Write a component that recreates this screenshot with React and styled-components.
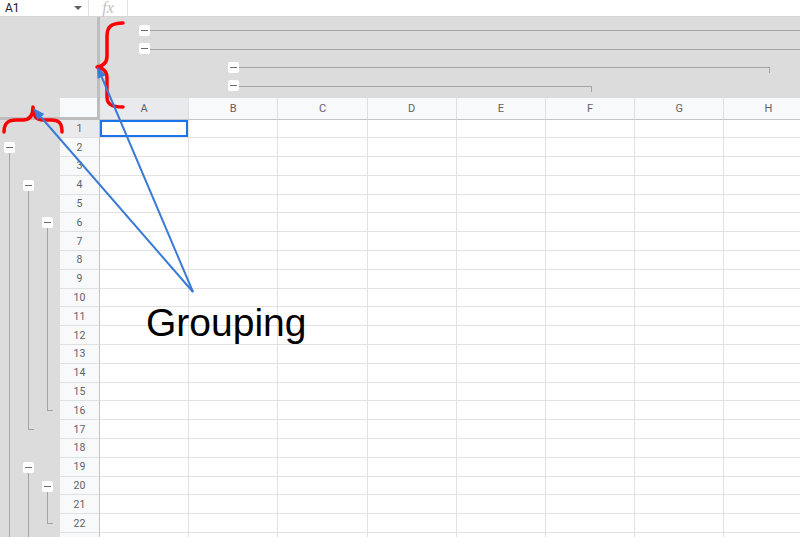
import React from 'react';
import styled, { createGlobalStyle } from 'styled-components';

const COL_W = 89.2;
const ROW_H = 18.8;
const LEVEL_H = 18.5;
const COLS = ['A', 'B', 'C', 'D', 'E', 'F', 'G', 'H'];
const ROW_COUNT = 23;
const LABELLED_ROWS = 22;
const GUTTER = '#dcdcdc';
const BAR = '#bdbdbd';
const GROUP_LINE = '#a4a4a4';

const rowGroups = [
  { level: 1, start: 2, end: 24, open: true },
  { level: 2, start: 4, end: 17 },
  { level: 3, start: 6, end: 16 },
  { level: 2, start: 19, end: 24, open: true },
  { level: 3, start: 20, end: 22 },
];

const colGroups = [
  { level: 1, start: 1, end: 8, open: true },
  { level: 2, start: 1, end: 8, open: true },
  { level: 3, start: 2, end: 8 },
  { level: 4, start: 2, end: 6 },
];

const GlobalStyle = createGlobalStyle`
  html, body { margin: 0; padding: 0; background: #fff; }
  body { font-family: Roboto, Arial, sans-serif; overflow: hidden; }
`;

const Page = styled.div`
  position: relative;
  width: 800px;
  height: 537px;
  overflow: hidden;
  display: flex;
  flex-direction: column;
  background: #fff;
`;

const FormulaBar = styled.div`
  height: 17px;
  box-sizing: border-box;
  display: flex;
  align-items: stretch;
  border-bottom: 1px solid #d6d6d6;
  background: #fff;
`;

const NameBox = styled.div`
  width: 88px;
  box-sizing: border-box;
  padding: 0 5px 0 5px;
  display: flex;
  align-items: center;
  justify-content: space-between;
  font-size: 12px;
  color: #202124;
`;

const Caret = styled.span`
  width: 0;
  height: 0;
  border-left: 4px solid transparent;
  border-right: 4px solid transparent;
  border-top: 4px solid #5f6368;
  margin-right: 1px;
`;

const Divider = styled.div`
  width: 1px;
  background: #e3e3e3;
`;

const Fx = styled.div`
  width: 38px;
  display: flex;
  align-items: center;
  justify-content: center;
  font-family: 'Liberation Serif', serif;
  font-style: italic;
  font-size: 16px;
  line-height: 16px;
  color: #c2c2c2;
`;

const TopArea = styled.div`
  height: 81px;
  display: flex;
  background: ${GUTTER};
`;

const CornerGutter = styled.div`
  width: 97px;
`;

const VBar = styled.div`
  width: 3px;
  background: ${BAR};
  grid-column: ${(p) => p.$col || 'auto'};
`;

const ColGutter = styled.div`
  flex: 1;
  overflow: hidden;
  display: grid;
  grid-template-columns: repeat(${COLS.length}, ${COL_W}px);
  grid-template-rows: repeat(4, ${LEVEL_H}px);
  padding-top: 4px;
`;

const ColGroup = styled.div`
  grid-row: ${(p) => p.$level};
  grid-column: ${(p) => p.$start} / ${(p) => p.$end + 1};
  display: flex;
  align-items: flex-start;
  padding-left: 39px;
  min-width: 0;
`;

const HLine = styled.div`
  flex: 1;
  height: 5px;
  margin-top: 9px;
  border-top: 1px solid ${GROUP_LINE};
  border-right: ${(p) => (p.$open ? 'none' : `1px solid ${GROUP_LINE}`)};
  margin-right: ${(p) => (p.$open ? 0 : `${COL_W / 2 - 1}px`)};
`;

const MinusButton = styled.div`
  width: 11px;
  height: 11px;
  flex: none;
  border-radius: 2px;
  background: #fff;
  display: flex;
  align-items: center;
  justify-content: center;
  margin-top: ${(p) => p.$offset || 0}px;
  &::before {
    content: '';
    width: 7px;
    height: 1px;
    background: #6b6b6b;
  }
`;

const HeaderRow = styled.div`
  height: 21.5px;
  display: flex;
`;

const CornerBlock = styled.div`
  width: 100px;
  flex: none;
  display: grid;
  grid-template-columns: 60px 37px 3px;
  grid-template-rows: 18.5px 3px;
  background: ${GUTTER};
`;

const CornerCell = styled.div`
  grid-column: 2;
  grid-row: 1;
  background: #f8f9fa;
`;

const HBar = styled.div`
  grid-column: 1 / 4;
  grid-row: 2;
  background: ${BAR};
`;

const ColHeaders = styled.div`
  flex: 1;
  display: grid;
  grid-template-columns: repeat(${COLS.length}, ${COL_W}px);
  overflow: hidden;
`;

const ColHeader = styled.div`
  box-sizing: border-box;
  background: ${(p) => (p.$active ? '#e8eaed' : '#f8f9fa')};
  border-right: 1px solid #e0e0e0;
  border-bottom: 1px solid #c4c4c4;
  display: flex;
  align-items: center;
  justify-content: center;
  font-size: 11px;
  color: #5f6368;
`;

const Body = styled.div`
  flex: 1;
  display: flex;
  min-height: 0;
  overflow: hidden;
`;

const RowGutter = styled.div`
  width: 60px;
  flex: none;
  background: ${GUTTER};
  display: grid;
  grid-template-columns: repeat(3, 19px);
  grid-auto-rows: ${ROW_H}px;
  align-content: start;
`;

const RowGroup = styled.div`
  grid-column: ${(p) => p.$level};
  grid-row: ${(p) => p.$start} / ${(p) => p.$end + 1};
  display: flex;
  flex-direction: column;
  align-items: center;
  padding-top: 3.9px;
  min-height: 0;
`;

const VLine = styled.div`
  flex: 1;
  align-self: flex-start;
  margin-left: 9px;
  width: 5px;
  border-left: 1px solid ${GROUP_LINE};
  border-bottom: ${(p) => (p.$open ? 'none' : `1px solid ${GROUP_LINE}`)};
  margin-bottom: ${(p) => (p.$open ? 0 : `${ROW_H / 2 - 0.5}px`)};
`;

const SheetGrid = styled.div`
  flex: 1;
  display: grid;
  grid-template-columns: 40px repeat(${COLS.length}, ${COL_W}px);
  grid-auto-rows: ${ROW_H}px;
  align-content: start;
  overflow: hidden;
`;

const RowHeader = styled.div`
  box-sizing: border-box;
  background: ${(p) => (p.$active ? '#e8eaed' : '#f8f9fa')};
  border-right: 1px solid #c4c4c4;
  border-bottom: 1px solid #e0e0e0;
  display: flex;
  align-items: center;
  justify-content: center;
  font-size: 10.5px;
  color: #5f6368;
`;

const Cell = styled.div`
  box-sizing: border-box;
  border-right: 1px solid #e2e2e2;
  border-bottom: 1px solid #e2e2e2;
  box-shadow: ${(p) => (p.$selected ? 'inset 0 0 0 2px #1a73e8' : 'none')};
`;

const Overlay = styled.svg`
  position: absolute;
  left: 0;
  top: 0;
  pointer-events: none;
`;

const Label = styled.div`
  position: absolute;
  left: 146px;
  top: 303px;
  font-family: 'Liberation Sans', Arial, sans-serif;
  font-size: 39px;
  line-height: 39px;
  color: #000;
  pointer-events: none;
`;

export default function App() {
  return (
    <>
      <GlobalStyle />
      <Page>
        <FormulaBar>
          <NameBox>
            A1
            <Caret />
          </NameBox>
          <Divider />
          <Fx>fx</Fx>
          <Divider />
        </FormulaBar>

        <TopArea>
          <CornerGutter />
          <VBar />
          <ColGutter>
            {colGroups.map((g, i) => (
              <ColGroup key={i} $level={g.level} $start={g.start} $end={g.end}>
                <MinusButton $offset={3.75} />
                <HLine $open={g.open} />
              </ColGroup>
            ))}
          </ColGutter>
        </TopArea>

        <HeaderRow>
          <CornerBlock>
            <CornerCell />
            <VBar $col={3} />
            <HBar />
          </CornerBlock>
          <ColHeaders>
            {COLS.map((c, i) => (
              <ColHeader key={c} $active={i === 0}>
                {c}
              </ColHeader>
            ))}
          </ColHeaders>
        </HeaderRow>

        <Body>
          <RowGutter>
            {rowGroups.map((g, i) => (
              <RowGroup key={i} $level={g.level} $start={g.start} $end={g.end}>
                <MinusButton />
                <VLine $open={g.open} />
              </RowGroup>
            ))}
          </RowGutter>
          <SheetGrid>
            {Array.from({ length: ROW_COUNT }, (_, r) => (
              <React.Fragment key={r}>
                <RowHeader $active={r === 0}>{r < LABELLED_ROWS ? r + 1 : ''}</RowHeader>
                {COLS.map((c, ci) => (
                  <Cell key={c} $selected={r === 0 && ci === 0} />
                ))}
              </React.Fragment>
            ))}
          </SheetGrid>
        </Body>

        <Overlay width="800" height="537" viewBox="0 0 800 537">
          <path
            d="M123,23 C111,23 107,27 107,36 L107,56 C107,63 103,66 97,67 C103,68 107,71 107,78 L107,97 C107,104 111,107 123,107"
            fill="none"
            stroke="#ff0000"
            strokeWidth="3.5"
            strokeLinecap="round"
            strokeLinejoin="round"
          />
          <path
            d="M4,132 C4,123 8,120 16,120 L23,120 C30,120 33,115 33,107 C33,115 36,120 43,120 L51,120 C59,120 62,123 62,132"
            fill="none"
            stroke="#ff0000"
            strokeWidth="3.5"
            strokeLinecap="round"
            strokeLinejoin="round"
          />
          <line x1="193" y1="292" x2="101.7" y2="77" stroke="#3a7bd5" strokeWidth="2" />
          <polygon points="97,66 105.8,75.3 97.6,78.8" fill="#3a7bd5" />
          <line x1="193" y1="292" x2="40.9" y2="117" stroke="#3a7bd5" strokeWidth="2" />
          <polygon points="33,108 44.3,114.1 37.5,120" fill="#3a7bd5" />
        </Overlay>
        <Label>Grouping</Label>
      </Page>
    </>
  );
}
